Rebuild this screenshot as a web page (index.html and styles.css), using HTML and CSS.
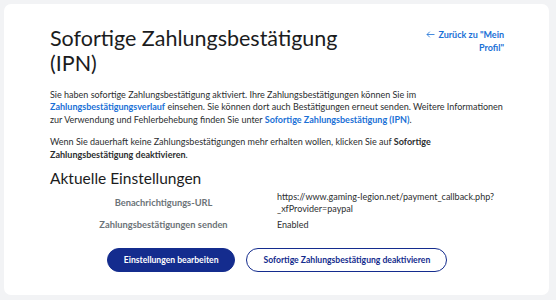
FILE: index.html
```html
<!DOCTYPE html>
<html lang="de">
<head>
<meta charset="utf-8">
<title>Sofortige Zahlungsbestätigung (IPN)</title>
<link rel="stylesheet" href="styles.css">
</head>
<body>
<main class="card">
  <header class="head">
    <h1 class="title">Sofortige Zahlungsbestätigung (IPN)</h1>
    <a class="back" href="#"><svg class="arrow" width="9" height="7" viewBox="0 0 9 7" aria-hidden="true"><path d="M8.5 3.5H1M3.8 0.7L1 3.5l2.8 2.8" fill="none" stroke="#1a70d6" stroke-width="0.8"/></svg> Zurück zu "Mein Profil"</a>
  </header>
  <p class="text">Sie haben sofortige Zahlungsbestätigung aktiviert. Ihre Zahlungsbestätigungen können Sie im <a class="link" href="#">Zahlungsbestätigungsverlauf</a> einsehen. Sie können dort auch Bestätigungen erneut senden. Weitere Informationen zur Verwendung und Fehlerbehebung finden Sie unter <a class="link" href="#">Sofortige Zahlungsbestätigung (IPN)</a>.</p>
  <p class="text text-2">Wenn Sie dauerhaft keine Zahlungsbestätigungen mehr erhalten wollen, klicken Sie auf <strong>Sofortige Zahlungsbestätigung deaktivieren</strong>.</p>
  <h2 class="subtitle">Aktuelle Einstellungen</h2>
  <dl class="settings">
    <dt class="label">Benachrichtigungs-URL</dt>
    <dd class="value">https://www.gaming-legion.net/payment_callback.php?<br>_xfProvider=paypal</dd>
    <dt class="label">Zahlungsbestätigungen senden</dt>
    <dd class="value">Enabled</dd>
  </dl>
  <div class="actions">
    <button class="btn btn-primary" type="button">Einstellungen bearbeiten</button>
    <button class="btn btn-secondary" type="button">Sofortige Zahlungsbestätigung deaktivieren</button>
  </div>
</main>
</body>
</html>
```
FILE: styles.css
```css
html, body {
  margin: 0;
  padding: 0;
}
body {
  background: #f2f3f5;
  font-family: Lato, "Open Sans", "DejaVu Sans", sans-serif;
  color: #2c2e2f;
  padding: 4px;
}
.card {
  width: 545px;
  box-sizing: border-box;
  background: #ffffff;
  border-radius: 7px;
  padding: 22px 45px 23px 46px;
}
.head {
  display: flex;
  align-items: flex-start;
  justify-content: space-between;
}
.title {
  margin: 0;
  font-size: 21.5px;
  line-height: 25px;
  font-weight: 400;
  color: #1b1c1d;
  max-width: 320px;
}
.back {
  width: 84px;
  margin-top: 3px;
  text-align: right;
  font-size: 9px;
  line-height: 12.5px;
  font-weight: 700;
  color: #1a70d6;
  text-decoration: none;
}
.arrow {
  vertical-align: 0;
  margin-right: 1px;
}
.text {
  margin: 13px 0 0;
  font-size: 9px;
  line-height: 12.4px;
}
.text-2 {
  margin-top: 10px;
}
.text strong {
  font-weight: 700;
}
.link {
  color: #1a70d6;
  font-weight: 700;
  text-decoration: none;
}
.subtitle {
  margin: 7px 0 0;
  font-size: 15.5px;
  line-height: 20px;
  font-weight: 400;
  color: #1b1c1d;
}
.settings {
  margin: 3px 0 0;
  display: grid;
  grid-template-columns: 1fr 1fr;
  row-gap: 4px;
  align-items: center;
  font-size: 9px;
  line-height: 12px;
}
.label {
  margin: 0;
  text-align: center;
  color: #6c7378;
  font-weight: 700;
  font-size: 9.3px;
}
.value {
  margin: 0;
  color: #2c2e2f;
  white-space: nowrap;
}
.actions {
  margin-top: 17px;
  display: flex;
  justify-content: center;
  gap: 11px;
}
.btn {
  height: 24px;
  border-radius: 12px;
  font-family: inherit;
  font-size: 8.6px;
  font-weight: 700;
  padding: 0 16px;
  cursor: pointer;
}
.btn-primary {
  background: #142c8e;
  color: #ffffff;
  border: 1px solid #142c8e;
}
.btn-secondary {
  background: #ffffff;
  color: #142c8e;
  border: 1px solid #142c8e;
}
```
